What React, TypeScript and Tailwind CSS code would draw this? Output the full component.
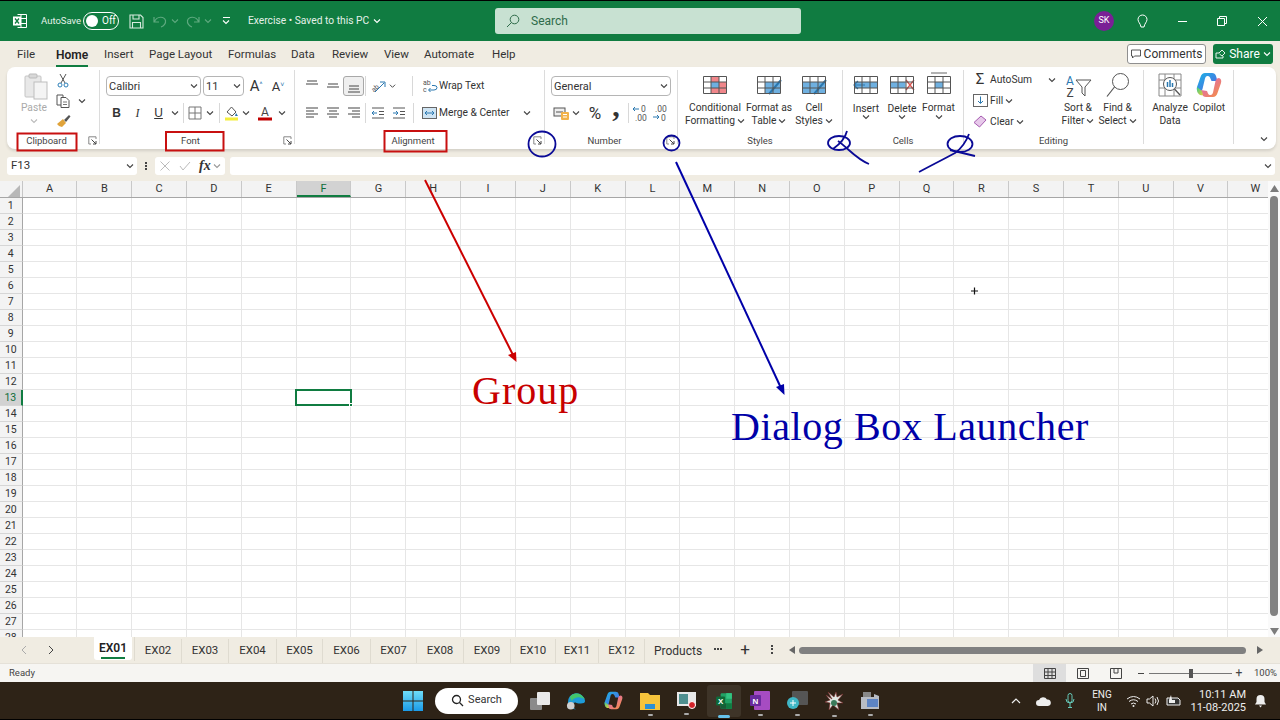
import React from "react";

const cols = "ABCDEFGHIJKLMNOPQRSTUVW".split("");
const rows = Array.from({ length: 28 }, (_, i) => i + 1);
const tabs = [
  ["EX02", "w-[47px]"], ["EX03", "w-[47px]"], ["EX04", "w-[48px]"], ["EX05", "w-[46px]"], ["EX06", "w-[48px]"],
  ["EX07", "w-[46px]"], ["EX08", "w-[47px]"], ["EX09", "w-[47px]"], ["EX10", "w-[45px]"], ["EX11", "w-[43px]"], ["EX12", "w-[46px]"],
];

function Chev({ c = "#444", cls = "" }: { c?: string; cls?: string }) {
  return (
    <svg width="8" height="6" viewBox="0 0 8 6" className={cls}>
      <path d="M1 1.500 L4 4.500 L7 1.500" fill="none" stroke={c} strokeWidth="1.100" />
    </svg>
  );
}

function Lines({ l }: { l: [number, number, number][] }) {
  return (
    <svg width="16" height="16" viewBox="0 0 16 16">
      {l.map(([y, a, b], i) => (
        <path key={i} d={`M${a} ${y}H${b}`} stroke="#555" strokeWidth="1.100" />
      ))}
    </svg>
  );
}

function Launcher() {
  return (
    <svg width="9" height="9" viewBox="0 0 9 9">
      <path d="M8 3V.8H.8V8H3" fill="none" stroke="#888" />
      <path d="M3.500 3.500L8 8M8 5V8H5" fill="none" stroke="#444" />
    </svg>
  );
}

function Group({ w, label, launcher, children }: { w: string; label: string; launcher?: boolean; children: React.ReactNode }) {
  return (
    <div className={`${w} shrink-0 h-full flex flex-col relative`}>
      <div className="h-[65px] shrink-0">{children}</div>
      <div className="flex items-center h-[17px]">
        <div className="flex-1 text-center text-[9.5px] text-[#444] leading-none">{label}</div>
        {launcher && <div className="w-[13px] flex justify-center"><Launcher /></div>}
      </div>
    </div>
  );
}

function Sep() {
  return <div className="w-px h-[74px] my-[3px] bg-[#dcdcdc] shrink-0" />;
}

function RSep() {
  return <div className="w-px h-[20px] bg-[#d8d8d8] shrink-0" />;
}

function Box({ w, children, sel }: { w: string; children?: React.ReactNode; sel?: boolean }) {
  return (
    <div className={`${w} h-[20px] shrink-0 flex items-center justify-center ${sel ? "bg-[#efefef] border border-[#a8a8a8] rounded-[3px]" : ""}`}>{children}</div>
  );
}

function Select({ w, text }: { w: string; text: string }) {
  return (
    <div className={`${w} h-[20px] shrink-0 border border-[#b5b5b5] rounded-[4px] flex items-center justify-between pl-[2px] pr-[2px] bg-white`}>
      <span className="text-[11px] text-[#333] leading-none">{text}</span>
      <Chev />
    </div>
  );
}

function Big({ w, icon, a, b, low }: { w: string; icon: React.ReactNode; a: string; b?: string; low?: boolean }) {
  return (
    <div className={`${w} shrink-0 flex flex-col items-center pt-[5px]`}>
      <div className="h-[26px] flex items-center justify-center">{icon}</div>
      <div className={`text-[10.25px] leading-[13px] text-[#333] text-center whitespace-nowrap ${low ? "mt-[4px]" : "mt-[3px]"}`}>{a}</div>
      <div className={`text-[10.25px] leading-[13px] text-[#333] text-center whitespace-nowrap flex items-center justify-center gap-[2px] ${low ? "mt-[-1px]" : ""}`}>
        {b && <span>{b}</span>}
        {b !== "Data" && <Chev />}
      </div>
    </div>
  );
}

const TableIcon = ({ children }: { children?: React.ReactNode }) => (
  <svg width="26" height="22" viewBox="0 0 26 22" className="overflow-visible">
    {children}
    <path d="M1.500 2.500H24.500V19.500H1.500ZM1.500 8H24.500M1.500 14H24.500M9 2.500V19.500M17 2.500V19.500" fill="none" stroke="#555" strokeWidth="1" />
  </svg>
);

function Excel({ s = 16 }: { s?: number }) {
  return (
    <svg width={s} height={s} viewBox="0 0 16 16">
      <rect x="5" y="1" width="10" height="14" rx="1" fill="#21a366" />
      <rect x="10" y="1" width="5" height="5" fill="#33c481" />
      <rect x="10" y="10" width="5" height="5" fill="#107c41" />
      <rect x="5" y="10" width="5" height="5" fill="#185c37" />
      <rect x="1" y="4" width="8" height="8" rx="1" fill="#0e6b38" />
      <text x="5" y="10.400" fontSize="7" fill="#fff" textAnchor="middle" fontWeight="700" fontFamily="Liberation Sans, sans-serif">X</text>
    </svg>
  );
}

function Copilot({ s = 26, id = "a" }: { s?: number; id?: string }) {
  return (
    <svg width={s} height={s} viewBox="0 0 26 26">
      <defs>
        <linearGradient id={`cp1${id}`} x1="0" y1="0" x2="1" y2="1"><stop offset="0" stopColor="#19b5e5" /><stop offset="1" stopColor="#5a5fe0" /></linearGradient>
        <linearGradient id={`cp2${id}`} x1="0" y1="0" x2="1" y2="1"><stop offset="0" stopColor="#d95fd0" /><stop offset="1" stopColor="#f7933a" /></linearGradient>
        <linearGradient id={`cp3${id}`} x1="0" y1="0" x2="1" y2="1"><stop offset="0" stopColor="#3ccf86" /><stop offset="1" stopColor="#e9c93c" /></linearGradient>
      </defs>
      <path d="M9 1h7c2 0 3.500 1 4 3l1.500 5h-6L14 5.500C13.500 4.500 12.500 4 11.500 4 10 4 9.500 5 9 6.500L6.500 17c-.5 2-2 3-3.500 3C1 19.500.3 17.500 1 15L4.500 5C5.300 2.500 7 1 9 1z" fill={`url(#cp1${id})`} />
      <path d="M17 25h-7c-2 0-3.500-1-4-3l-1-4 6 1 1 2.500c.5 1 1.500 1.500 2.500 1.500 1.500 0 2-1 2.500-2.500L19.500 9c.5-2 2-3 3.500-3 2 .5 2.700 2.500 2 5l-3.500 10c-.8 2.500-2.500 4-4.500 4z" fill={`url(#cp2${id})`} />
      <path d="M1 15l5 4 1 4c-3 1-5-1-6-4z" fill={`url(#cp3${id})`} />
    </svg>
  );
}

export default function App() {
  return (
    <div className="w-[1280px] h-[720px] relative overflow-hidden flex flex-col bg-[#f0ece2] font-['Roboto',sans-serif] text-[#333]">
      {/* Title bar */}
      <div className="h-[41px] shrink-0 bg-[#107c41] border-t border-black flex items-center text-white relative">
        <div className="w-[41px] pl-[12px] flex items-center">
          <svg width="16" height="16" viewBox="0 0 16 16">
            <path d="M5.500 1.500H14.500V14.500H5.500M9 1.500V14.500M5.500 5.500H14.500M5.500 10.500H14.500" fill="none" stroke="#fff" />
            <rect x="1" y="3.500" width="8" height="9" fill="#fff" />
            <path d="M3 5.500L7 10.500M7 5.500L3 10.500" stroke="#107c41" strokeWidth="1.300" />
          </svg>
        </div>
        <span className="text-[9.5px] w-[42px] text-[#e4f1e9]">AutoSave</span>
        <div className="w-[36px] h-[18px] rounded-full border border-white flex items-center pl-[2px] gap-[4px]">
          <div className="w-[12px] h-[12px] rounded-full bg-white" />
          <span className="text-[10px] leading-none">Off</span>
        </div>
        <div className="ml-[10px] w-[16px]">
          <svg width="15" height="15" viewBox="0 0 15 15">
            <path d="M1 1H11.500L14 3.500V14H1ZM4 1V5H10V1M3.500 14V8.500H11.500V14" fill="none" stroke="#d7ebdf" strokeWidth="1.100" />
          </svg>
        </div>
        <div className="ml-[8px] flex items-center gap-[4px] w-[30px]">
          <svg width="14" height="14" viewBox="0 0 14 14"><path d="M1 3V8H6M1.500 7.500C4 2 11 2 12.500 6.500 13 9 11 12 8 13" fill="none" stroke="#5ea97f" strokeWidth="1.200" /></svg>
          <Chev c="#5ea97f" />
        </div>
        <div className="ml-[3px] flex items-center gap-[4px] w-[30px]">
          <svg width="14" height="14" viewBox="0 0 14 14"><path d="M13 3V8H8M12.500 7.500C10 2 3 2 1.500 6.500 1 9 3 12 6 13" fill="none" stroke="#5ea97f" strokeWidth="1.200" /></svg>
          <Chev c="#5ea97f" />
        </div>
        <div className="ml-[5px] w-[10px] flex flex-col items-center gap-[1px]">
          <div className="w-[7px] h-px bg-white" />
          <Chev c="#fff" />
        </div>
        <div className="ml-[17px] text-[10.25px] flex items-center gap-[4px] w-[247px] text-[#e4f1e9]">
          <span>Exercise&nbsp;•&nbsp;Saved to this PC</span>
          <Chev c="#fff" />
        </div>
        <div className="w-[306px] h-[26px] bg-[#c8e1d2] rounded-[3px] flex items-center pl-[11px] gap-[11px] text-[#2f6b4a] mt-[-1px]">
          <svg width="14" height="14" viewBox="0 0 14 14"><circle cx="8.500" cy="5.500" r="4.300" fill="none" stroke="#2f6b4a" /><path d="M5.500 8.500L1 13" stroke="#2f6b4a" /></svg>
          <span className="text-[12px]">Search</span>
        </div>
        <div className="flex-1" />
        <div className="w-[20px] h-[20px] rounded-full bg-[#7a1f96] flex items-center justify-center text-[9px]">SK</div>
        <div className="w-[20px] ml-[18px] flex justify-center">
          <svg width="11" height="14" viewBox="0 0 11 14"><path d="M5.500 1A4.500 4.500 0 0 0 1 5.500C1 8 3.500 9.500 4 13H7C7.500 9.500 10 8 10 5.500A4.500 4.500 0 0 0 5.500 1Z" fill="none" stroke="#fff" /></svg>
        </div>
        <div className="w-[40px] ml-[10px] flex justify-center"><div className="w-[9px] h-px bg-white" /></div>
        <div className="w-[40px] flex justify-center">
          <svg width="10" height="10" viewBox="0 0 10 10"><path d="M.5 2.500H7.500V9.500H.5ZM2.500 2.500V.5H9.500V7.500H7.500" fill="none" stroke="#fff" /></svg>
        </div>
        <div className="w-[40px] mr-[-2px] flex justify-center">
          <svg width="11" height="11" viewBox="0 0 11 11"><path d="M1 1L10 10M10 1L1 10" stroke="#fff" /></svg>
        </div>
      </div>

      {/* Ribbon tabs */}
      <div className="h-[26px] shrink-0 flex items-center pl-[17px] pr-[7px] text-[11.5px] text-[#333] relative">
        <span className="w-[39px] pt-px">File</span>
        <span className="w-[48px] pt-px font-semibold text-[#222] relative text-[12px]">
          Home
          <div className="absolute left-0 bottom-[-3px] w-[32px] h-[2px] bg-[#107c41]" />
        </span>
        <span className="w-[45px] pt-px">Insert</span>
        <span className="w-[79px] pt-px">Page Layout</span>
        <span className="w-[63px] pt-px">Formulas</span>
        <span className="w-[41px] pt-px">Data</span>
        <span className="w-[52px] pt-px">Review</span>
        <span className="w-[40px] pt-px">View</span>
        <span className="w-[68px] pt-px">Automate</span>
        <span className="pt-px">Help</span>
        <div className="flex-1" />
        <div className="w-[79px] h-[20px] border border-[#8f8f8f] bg-white rounded-[3px] flex items-center justify-center gap-[3px] text-[12px] mt-[-1px]">
          <svg width="10" height="10" viewBox="0 0 10 10"><path d="M.5 1H9.500V7H3.500L1.500 9V7H.5Z" fill="none" stroke="#444" strokeWidth=".9" /></svg>
          Comments
        </div>
        <div className="ml-[7px] w-[60px] h-[20px] bg-[#107c41] rounded-[3px] flex items-center justify-center gap-[3px] text-[12px] text-white mt-[-1px]">
          <svg width="11" height="10" viewBox="0 0 11 10"><path d="M1 4H4L7 1 10 4 7 7 4.500 5M1 4V9H8V7" fill="none" stroke="#fff" strokeWidth=".9" /></svg>
          Share
          <Chev c="#fff" />
        </div>
      </div>

      {/* Ribbon */}
      <div className="h-[82px] mx-[7px] w-[1269px] shrink-0 bg-white rounded-[8px] flex shadow-[0_2px_3px_rgba(0,0,0,0.12)]">
        <Group w="w-[92px]" label="Clipboard" launcher>
          <div className="flex pl-[12px] pt-[6px]">
            <div className="w-[30px] flex flex-col items-center">
              <svg width="24" height="27" viewBox="0 0 24 27" className="ml-[4px]">
                <rect x="1" y="3" width="16" height="21" rx="1" fill="#e8e8e8" stroke="#c4c4c4" />
                <rect x="5" y="1" width="8" height="4" rx="1" fill="#d8d8d8" stroke="#bbb" />
                <rect x="10" y="9" width="13" height="17" fill="#f4f4f4" stroke="#bdbdbd" />
              </svg>
              <span className="text-[10.25px] text-[#aaa] leading-none mt-[3px]">Paste</span>
              <Chev c="#bbb" cls="mt-[5px]" />
            </div>
            <div className="ml-[5px] w-[18px] flex flex-col items-center gap-[6px]">
              <svg width="12" height="15" viewBox="0 0 12 15"><path d="M3 1L8 10M9 1L4 10" stroke="#555" /><circle cx="3" cy="12" r="2" fill="none" stroke="#2c7fb8" /><circle cx="9" cy="12" r="2" fill="none" stroke="#2c7fb8" /></svg>
              <svg width="14" height="14" viewBox="0 0 14 14"><path d="M1 1H7V11H1Z" fill="none" stroke="#555" /><path d="M5 3.500H10L13 6.500V13.500H5Z" fill="#fff" stroke="#555" /><path d="M7 8H11M7 10.500H11" stroke="#777" /></svg>
              <svg width="15" height="14" viewBox="0 0 15 14"><path d="M8 6L13 1 14.500 2.500 10 8Z" fill="#555" /><path d="M1 10L7 5 10 9 6 13Q3 13 1 10Z" fill="#e0a33a" /></svg>
            </div>
            <Chev cls="ml-[6px] mt-[25px]" />
          </div>
        </Group>
        <Sep />
        <Group w="w-[194px]" label="Font" launcher>
          <div className="pl-[6px] pt-[9px]">
            <div className="flex items-center">
              <Select w="w-[95px]" text="Calibri" />
              <div className="w-[2px]" />
              <Select w="w-[41px]" text="11" />
              <Box w="w-[24px]"><span className="text-[15px] leading-none">A<sup className="text-[7px] text-[#2a78b0]">^</sup></span></Box>
              <Box w="w-[20px]"><span className="text-[13px] leading-none">A<sup className="text-[7px] text-[#2a78b0]">˅</sup></span></Box>
            </div>
            <div className="flex items-center mt-[7px]">
              <Box w="w-[21px]"><span className="text-[12px] font-bold font-['Liberation_Sans']">B</span></Box>
              <Box w="w-[21px]"><span className="text-[12px] italic font-['Liberation_Serif']">I</span></Box>
              <Box w="w-[21px]"><span className="text-[12px] underline font-['Liberation_Sans']">U</span></Box>
              <Box w="w-[11px]"><Chev /></Box>
              <Box w="w-[6px]"><RSep /></Box>
              <Box w="w-[18px]">
                <svg width="14" height="14" viewBox="0 0 14 14"><path d="M1 1H13V13H1ZM7 1V13M1 7H13" fill="none" stroke="#777" /></svg>
              </Box>
              <Box w="w-[12px]"><Chev /></Box>
              <Box w="w-[6px]"><RSep /></Box>
              <Box w="w-[18px]">
                <svg width="15" height="16" viewBox="0 0 15 16"><path d="M3 7L7.500 2 12 7 8 11Z" fill="#fff" stroke="#555" /><path d="M12 8L14 11H11Z" fill="#2a78b0" /><rect x="1" y="12.500" width="13" height="3" fill="#f4ee3b" /></svg>
              </Box>
              <Box w="w-[12px]"><Chev /></Box>
              <Box w="w-[26px]">
                <svg width="14" height="17" viewBox="0 0 14 17" className="overflow-visible"><text x="7" y="11" fontSize="12" textAnchor="middle" fill="#444" fontFamily="Roboto, sans-serif">A</text><rect x="0" y="12.500" width="14" height="3" fill="#c00000" /></svg>
              </Box>
              <Box w="w-[8px]"><Chev /></Box>
            </div>
          </div>
        </Group>
        <Sep />
        <Group w="w-[249px]" label="Alignment" launcher>
          <div className="pl-[6px] pt-[9px]">
            <div className="flex items-center">
              <Box w="w-[21px]"><Lines l={[[3, 3, 13], [6, 2, 14]]} /></Box>
              <Box w="w-[21px]"><Lines l={[[6, 3, 13], [9, 2, 14]]} /></Box>
              <Box w="w-[21px]" sel><Lines l={[[8, 3, 13], [11, 3, 13], [14, 2, 14]]} /></Box>
              <Box w="w-[3px]"><RSep /></Box>
              <Box w="w-[22px]">
                <svg width="15" height="15" viewBox="0 0 15 15" className="overflow-visible"><text x="0" y="10" fontSize="7" transform="rotate(-40 6 8)" fill="#555" fontFamily="Roboto, sans-serif">ab</text><path d="M4 13L13 4M9 3H14V8" fill="none" stroke="#2a78b0" /></svg>
              </Box>
              <Box w="w-[7px]"><Chev /></Box>
              <div className="w-[16px]" />
              <Box w="w-[1px]"><RSep /></Box>
              <div className="w-[9px]" />
              <Box w="w-[16px]">
                <svg width="15" height="14" viewBox="0 0 15 14" className="overflow-visible"><text x="0" y="6" fontSize="7" fill="#555" fontFamily="Roboto, sans-serif">ab</text><text x="0" y="13" fontSize="7" fill="#555" fontFamily="Roboto, sans-serif">c</text><path d="M6 11H11Q14 11 14 8.500 14 6.500 11 6.500H9M7.500 9L5.500 11 7.500 13" fill="none" stroke="#2a78b0" /></svg>
              </Box>
              <span className="text-[10.25px] ml-[1px] whitespace-nowrap">Wrap Text</span>
            </div>
            <div className="flex items-center mt-[7px]">
              <Box w="w-[21px]"><Lines l={[[3, 2, 14], [6, 2, 10], [9, 2, 14], [12, 2, 10]]} /></Box>
              <Box w="w-[21px]"><Lines l={[[3, 2, 14], [6, 4, 12], [9, 2, 14], [12, 4, 12]]} /></Box>
              <Box w="w-[21px]"><Lines l={[[3, 2, 14], [6, 6, 14], [9, 2, 14], [12, 6, 14]]} /></Box>
              <Box w="w-[3px]"><RSep /></Box>
              <Box w="w-[21px]">
                <svg width="16" height="16" viewBox="0 0 16 16"><path d="M2 3H14M9 6.500H14M9 9.500H14M2 13H14" stroke="#555" /><path d="M2 8H7M4 6L2 8 4 10" fill="none" stroke="#2a78b0" /></svg>
              </Box>
              <Box w="w-[21px]">
                <svg width="16" height="16" viewBox="0 0 16 16"><path d="M2 3H14M9 6.500H14M9 9.500H14M2 13H14" stroke="#555" /><path d="M2 8H7M5 6L7 8 5 10" fill="none" stroke="#2a78b0" /></svg>
              </Box>
              <div className="w-[4px]" />
              <Box w="w-[1px]"><RSep /></Box>
              <div className="w-[7px]" />
              <Box w="w-[16px]">
                <svg width="15" height="14" viewBox="0 0 15 14"><rect x=".5" y="1.500" width="14" height="11" fill="#cfe4f3" stroke="#666" /><path d="M3 7H12M3 7L5 5M3 7L5 9M12 7L10 5M12 7L10 9" fill="none" stroke="#2a78b0" /></svg>
              </Box>
              <span className="text-[10.25px] ml-[2px] w-[84px] whitespace-nowrap">Merge &amp; Center</span>
              <Chev />
            </div>
          </div>
        </Group>
        <Sep />
        <Group w="w-[132px]" label="Number" launcher>
          <div className="pl-[6px] pt-[9px]">
            <Select w="w-[120px]" text="General" />
            <div className="flex items-center mt-[7px]">
              <Box w="w-[20px]">
                <svg width="17" height="15" viewBox="0 0 17 15"><rect x="1" y="2" width="11" height="8" fill="#eee" stroke="#555" /><path d="M3 6H10" stroke="#555" /><rect x="8" y="6" width="8" height="8" rx="1" fill="#f2b24a" /><path d="M10 8.500H14M10 11H14" stroke="#fff" /></svg>
              </Box>
              <Box w="w-[10px]"><Chev /></Box>
              <div className="w-[4px]" />
              <Box w="w-[20px]"><span className="text-[17px] leading-none">%</span></Box>
              <div className="w-[1px]" />
              <Box w="w-[20px]"><span className="text-[30px] font-bold font-['Liberation_Serif'] leading-[20px] mt-[-14px]">,</span></Box>
              <div className="w-[2px]" />
              <Box w="w-[1px]"><RSep /></Box>
              <div className="w-[1px]" />
              <Box w="w-[20px]">
                <svg width="16" height="17" viewBox="0 0 16 17" className="overflow-visible"><text x="9" y="7" fontSize="8.500" fill="#555" fontFamily="Roboto, sans-serif">0</text><text x="3" y="15.500" fontSize="8.500" fill="#555" fontFamily="Roboto, sans-serif">.00</text><path d="M1 4H7M3 2L1 4 3 6" fill="none" stroke="#2a78b0" /></svg>
              </Box>
              <Box w="w-[20px]">
                <svg width="16" height="17" viewBox="0 0 16 17" className="overflow-visible"><text x="3" y="7" fontSize="8.500" fill="#555" fontFamily="Roboto, sans-serif">.00</text><text x="9" y="15.500" fontSize="8.500" fill="#555" fontFamily="Roboto, sans-serif">0</text><path d="M1 12H7M5 10L7 12 5 14" fill="none" stroke="#2a78b0" /></svg>
              </Box>
            </div>
          </div>
        </Group>
        <Sep />
        <Group w="w-[164px]" label="Styles">
          <div className="flex pl-[4px]">
            <Big w="w-[66px]" a="Conditional" b="Formatting" icon={
              <TableIcon>
                <rect x="9" y="2.500" width="8" height="5.500" fill="#f0868a" />
                <rect x="9" y="8" width="8" height="6" fill="#6fb0e0" />
                <rect x="9" y="14" width="15" height="5.500" fill="#f0868a" />
                <rect x="17" y="8" width="7.500" height="6" fill="#f0868a" />
              </TableIcon>} />
            <Big w="w-[42px]" a="Format as" b="Table" icon={
              <TableIcon>
                <rect x="9" y="8" width="15" height="11.500" fill="#6fb0e0" />
                <path d="M25 6L13 20" stroke="#2a78b0" strokeWidth="2" />
              </TableIcon>} />
            <Big w="w-[48px]" a="Cell" b="Styles" icon={
              <TableIcon>
                <rect x="1.500" y="8" width="23" height="11.500" fill="#6fb0e0" />
                <path d="M25 6L13 20" stroke="#2a78b0" strokeWidth="2" />
              </TableIcon>} />
          </div>
        </Group>
        <Sep />
        <Group w="w-[120px]" label="Cells">
          <div className="flex pl-[5px]">
            <Big w="w-[36px]" low a="Insert" icon={
              <TableIcon>
                <rect x="1.500" y="8" width="23" height="6" fill="#6fb0e0" />
                <path d="M12 11H1M5 7L1 11 5 15" fill="none" stroke="#2a78b0" strokeWidth="1.200" />
              </TableIcon>} />
            <Big w="w-[36px]" low a="Delete" icon={
              <TableIcon>
                <rect x="1.500" y="8" width="15" height="6" fill="#6fb0e0" />
                <path d="M17 6L25 16M25 6L17 16" stroke="#d9534f" strokeWidth="1.300" />
              </TableIcon>} />
            <Big w="w-[37px]" a="Format" icon={
              <TableIcon>
                <rect x="9" y="8" width="8" height="6" fill="#6fb0e0" />
                <path d="M5 -1H21" stroke="#666" strokeWidth="1" />
              </TableIcon>} />
          </div>
        </Group>
        <Sep />
        <Group w="w-[179px]" label="Editing">
          <div className="flex pl-[7px]">
            <div className="w-[87px] shrink-0 flex flex-col pt-[2px] text-[10.25px]">
              <div className="h-[21px] flex items-center">
                <div className="w-[18px] text-center text-[15px] leading-none">Σ</div>
                <span className="ml-[1px] w-[58px]">AutoSum</span>
                <Chev />
              </div>
              <div className="h-[21px] flex items-center">
                <div className="w-[18px] flex justify-center">
                  <svg width="15" height="13" viewBox="0 0 15 13"><rect x=".5" y=".5" width="14" height="12" fill="#fff" stroke="#666" /><path d="M7.500 2.500V9M5 7L7.500 9.500 10 7" fill="none" stroke="#2a78b0" /></svg>
                </div>
                <span className="ml-[1px]">Fill</span>
                <Chev cls="ml-[2px]" />
              </div>
              <div className="h-[21px] flex items-center">
                <div className="w-[18px] flex justify-center">
                  <svg width="14" height="13" viewBox="0 0 14 13"><path d="M1 7.500L8 1 13 5 6.500 12Z" fill="#e7c9ea" stroke="#a55bb0" /></svg>
                </div>
                <span className="ml-[1px]">Clear</span>
                <Chev cls="ml-[2px]" />
              </div>
            </div>
            <Big w="w-[40px]" a="Sort &" b="Filter" icon={
              <svg width="28" height="26" viewBox="0 0 28 26" className="overflow-visible">
                <text x="6" y="13" fontSize="12" textAnchor="middle" fill="#2a78b0" fontFamily="Roboto, sans-serif">A</text>
                <text x="6" y="25" fontSize="12" textAnchor="middle" fill="#444" fontFamily="Roboto, sans-serif">Z</text>
                <path d="M12 8H27L21 15V24L18 21V15Z" fill="none" stroke="#555" />
              </svg>} />
            <Big w="w-[39px]" a="Find &" b="Select" icon={
              <svg width="26" height="26" viewBox="0 0 26 26">
                <circle cx="15.500" cy="9.500" r="8" fill="none" stroke="#555" />
                <path d="M9.500 15L2 24.500" stroke="#555" strokeWidth="1.200" />
              </svg>} />
          </div>
        </Group>
        <Sep />
        <Group w="w-[89px]" label="">
          <div className="flex pl-[6px]">
            <Big w="w-[40px]" a="Analyze" b="Data" icon={
              <svg width="24" height="24" viewBox="0 0 24 24">
                <path d="M1 1H23V23H1ZM1 7H23M1 15H23M7 1V23M16 1V23" fill="none" stroke="#888" />
                <circle cx="12" cy="11" r="6.500" fill="#fff" stroke="#555" />
                <path d="M9.500 9V14M12 7V14M14.500 10V14" stroke="#2a78b0" strokeWidth="1.500" />
                <path d="M16.500 16L22 22" stroke="#555" strokeWidth="1.300" />
              </svg>} />
            <div className="w-[38px] shrink-0 flex flex-col items-center pt-[5px]">
              <Copilot id="r" />
              <span className="text-[10.25px] leading-[13px] mt-[3px]">Copilot</span>
            </div>
          </div>
        </Group>
        <Sep />
        <div className="flex-1 flex items-end justify-end pr-[8px] pb-[7px]"><Chev /></div>
      </div>

      {/* Formula bar */}
      <div className="h-[18px] mt-[8px] shrink-0 flex items-center pl-[7px] pr-[5px]">
        <div className="w-[130px] h-full bg-white rounded-[3px] flex items-center justify-between pl-[4px] pr-[3px] text-[11.5px]">
          <span>F13</span>
          <Chev />
        </div>
        <div className="w-[18px] flex flex-col items-center gap-[1px]">
          <div className="w-[2px] h-[2px] bg-[#444]" /><div className="w-[2px] h-[2px] bg-[#444]" /><div className="w-[2px] h-[2px] bg-[#444]" />
        </div>
        <div className="w-[70px] h-full bg-white rounded-[3px] flex items-center pl-[5px]">
          <svg width="10" height="10" viewBox="0 0 10 10"><path d="M.5.5L9.500 9.500M9.500.5L.5 9.500" stroke="#bbb" /></svg>
          <svg width="12" height="10" viewBox="0 0 12 10" className="ml-[9px]"><path d="M1 5L4 9 11 1" fill="none" stroke="#bbb" /></svg>
          <span className="ml-[8px] text-[14px] italic font-bold font-['Liberation_Serif'] leading-none">fx</span>
          <Chev c="#999" cls="ml-[2px]" />
        </div>
        <div className="w-[5px]" />
        <div className="flex-1 h-full bg-white rounded-[3px] flex items-center justify-end pr-[3px]"><Chev /></div>
      </div>

      {/* Grid */}
      <div className="h-[456px] mt-[6px] shrink-0 flex bg-white overflow-hidden">
        <div className="w-[1268px] overflow-hidden shrink-0">
          <div className="flex h-[17px] bg-[#f3f3f3] border-b border-[#a6a6a6] w-[1300px]">
            <div className="w-[22.6px] shrink-0 flex items-end justify-end pr-[2px] border-r border-[#c6c6c6]">
              <svg width="12" height="12" viewBox="0 0 12 12"><path d="M12 0V12H0Z" fill="#b8b8b8" /></svg>
            </div>
            {cols.map((c) => (
              <div key={c} className={`w-[54.82px] shrink-0 text-center text-[11px] leading-[16px] border-r border-[#c9c9c9] ${c === "F" ? "bg-[#d2d2d2] text-[#0f6d3a] border-b-2 border-b-[#107c41]" : "text-[#333]"}`}>{c}</div>
            ))}
          </div>
          {rows.map((r) => (
            <div key={r} className="flex h-[16px] w-[1300px]">
              <div className={`w-[22.6px] shrink-0 text-center text-[10.5px] leading-[15px] border-b border-[#d6d6d6] border-r ${r === 13 ? "bg-[#d2d2d2] text-[#0f6d3a] border-r-2 border-r-[#107c41]" : "bg-[#f3f3f3] border-r-[#a6a6a6] text-[#333]"}`}>{r}</div>
              {cols.map((c) => (
                <div key={c} className="w-[54.82px] shrink-0 border-r border-b border-[#e6e6e6] relative">
                  {r === 13 && c === "F" && (
                    <div className="absolute left-[-2px] top-[-1px] w-[57px] h-[17px] border-2 border-[#107c41] z-10">
                      <div className="absolute right-[-3px] bottom-[-3px] w-[4px] h-[4px] bg-[#107c41] border border-white" />
                    </div>
                  )}
                </div>
              ))}
            </div>
          ))}
        </div>
        <div className="w-[12px] shrink-0 bg-[#fafafa] flex flex-col items-center">
          <svg width="9" height="7" viewBox="0 0 9 7" className="mt-[4px]"><path d="M4.500 0L9 7H0Z" fill="#7c7c7c" /></svg>
          <div className="w-[8px] h-[420px] rounded-full bg-[#828282] mt-[4px]" />
          <div className="flex-1" />
          <svg width="9" height="7" viewBox="0 0 9 7" className="mb-[2px]"><path d="M4.500 7L9 0H0Z" fill="#7c7c7c" /></svg>
        </div>
      </div>

      {/* Sheet tabs */}
      <div className="h-[27px] shrink-0 flex items-start bg-[#f0ece2] text-[11.5px] relative border-b border-[#e5e1d8]">
        <div className="w-[94px] h-[26px] flex items-center pl-[21px] gap-[21px]">
          <svg width="6" height="10" viewBox="0 0 6 10"><path d="M5 1L1 5 5 9" fill="none" stroke="#aaa" /></svg>
          <svg width="6" height="10" viewBox="0 0 6 10"><path d="M1 1L5 5 1 9" fill="none" stroke="#444" /></svg>
        </div>
        <div className="w-[38px] h-[23px] bg-white rounded-b-[3px] flex flex-col items-center font-semibold text-[12px] text-[#222] pt-[3px] leading-[16px]">
          EX01
          <div className="w-[24px] h-[1.500px] bg-[#107c41] mt-[1px]" />
        </div>
        <div className="w-[3px] h-[24px] border-r border-[#dfdbd0]" />
        {tabs.map(([t, w]) => (
          <div key={t} className={`${w} h-[24px] mt-[2px] flex items-center justify-center border-r border-[#dfdbd0]`}>{t}</div>
        ))}
        <div className="w-[66px] h-[26px] mt-px flex items-center justify-center text-[12px]">Products</div>
        <div className="w-[14px] h-[24px] flex items-center justify-center gap-[1px]">
          <i className="w-[2px] h-[2px] bg-[#444]" /><i className="w-[2px] h-[2px] bg-[#444]" /><i className="w-[2px] h-[2px] bg-[#444]" />
        </div>
        <div className="w-[40px] h-[24px] flex items-center justify-center text-[17px] leading-none">+</div>
        <div className="w-[14px] h-[24px] flex flex-col items-center justify-center gap-[1.500px]">
          <i className="w-[2px] h-[2px] bg-[#444]" /><i className="w-[2px] h-[2px] bg-[#444]" /><i className="w-[2px] h-[2px] bg-[#444]" />
        </div>
        <div className="ml-[10px] h-[26px] flex items-center">
          <svg width="6" height="8" viewBox="0 0 6 8"><path d="M6 0V8L0 4Z" fill="#666" /></svg>
          <div className="ml-[4px] w-[447px] h-[7px] rounded-full bg-[#808080]" />
          <svg width="6" height="8" viewBox="0 0 6 8" className="ml-[11px]"><path d="M0 0V8L6 4Z" fill="#666" /></svg>
        </div>
      </div>

      {/* Status bar */}
      <div className="h-[18px] shrink-0 bg-[#f6f5f2] flex items-center pl-[9px] text-[9.5px] text-[#444]">
        <span className="w-[1024px]">Ready</span>
        <div className="w-[33px] h-full bg-[#dedede] flex items-center justify-center">
          <svg width="12" height="11" viewBox="0 0 12 11"><path d="M.5.5H11.500V10.500H.5ZM.5 4H11.500M.5 7.500H11.500M4 .5V10.500M8 .5V10.500" fill="none" stroke="#444" /></svg>
        </div>
        <div className="w-[33px] flex justify-center">
          <svg width="12" height="11" viewBox="0 0 12 11"><path d="M.5.5H11.500V10.500H.5ZM3.500 2.500H8.500V8.500H3.500Z" fill="none" stroke="#444" /></svg>
        </div>
        <div className="w-[33px] flex justify-center">
          <svg width="12" height="11" viewBox="0 0 12 11"><path d="M.5.5H11.500V10.500H.5ZM4 .5V5H8V.5" fill="none" stroke="#444" /></svg>
        </div>
        <div className="ml-[6px] w-[6px] h-px bg-[#444]" />
        <div className="ml-[5px] w-[83px] h-px bg-[#777] relative flex justify-center items-center">
          <div className="w-[4px] h-[9px] bg-[#555] absolute" />
        </div>
        <div className="ml-[1px] text-[12px] leading-none w-[12px] text-center">+</div>
        <span className="ml-[9px]">100%</span>
      </div>

      {/* Taskbar */}
      <div className="flex-1 bg-[#2e2317] flex items-center relative border-b border-black">
        <div className="w-[403px]" />
        <svg width="20" height="20" viewBox="0 0 20 20">
          <defs><linearGradient id="w" x1="0" y1="0" x2="0" y2="1"><stop offset="0" stopColor="#6fdcf7" /><stop offset="1" stopColor="#1a9be8" /></linearGradient></defs>
          <path d="M0 0H9.500V9.500H0ZM10.500 0H20V9.500H10.500ZM0 10.500H9.500V20H0ZM10.500 10.500H20V20H10.500Z" fill="url(#w)" />
        </svg>
        <div className="ml-[12px] w-[83px] h-[26px] rounded-full bg-white flex items-center justify-center gap-[4px] text-[11px] text-[#333]">
          <svg width="13" height="13" viewBox="0 0 13 13"><circle cx="5.500" cy="5.500" r="4" fill="none" stroke="#222" strokeWidth="1.300" /><path d="M8.500 8.500L12 12" stroke="#222" strokeWidth="1.300" /></svg>
          Search
        </div>
        <div className="ml-[12px] w-[20px] flex justify-center">
          <svg width="20" height="18" viewBox="0 0 20 18"><rect x="0" y="6" width="12" height="12" rx="1" fill="#8a8a8a" /><rect x="7" y="0" width="13" height="13" rx="1" fill="#e9e9e9" /></svg>
        </div>
        <div className="ml-[16px] w-[20px] flex justify-center">
          <svg width="21" height="21" viewBox="0 0 21 21"><path d="M2 13A9 9 0 0 1 20 11C20 14 15 14 11 13 9 12 7 13 7 15 7 18 10 20 11 20A9 9 0 0 1 2 13Z" fill="#1e9bd8" /><path d="M4 7C7 2 16 1 20 10 17 6 9 6 6 11Z" fill="#43c76a" /><circle cx="5" cy="16" r="4" fill="#cfcfcf" /></svg>
        </div>
        <div className="ml-[17px] w-[20px] flex justify-center"><Copilot s={19} id="t" /></div>
        <div className="ml-[17px] w-[20px] flex flex-col items-center relative">
          <svg width="20" height="18" viewBox="0 0 20 18"><path d="M0 1H8L10 3H20V18H0Z" fill="#f5c33b" /><rect x="5" y="12" width="10" height="5" fill="#2b8fd4" /></svg>
          <div className="absolute bottom-[-6px] w-[5px] h-[2px] rounded-full bg-[#aaa]" />
        </div>
        <div className="ml-[16px] w-[20px] flex flex-col items-center relative">
          <svg width="19" height="17" viewBox="0 0 19 17"><rect x="0" y="0" width="19" height="14" fill="#e8e8e8" /><rect x="2" y="2" width="9" height="10" fill="#4f8f8f" /><circle cx="15" cy="13" r="3.500" fill="#d3232a" stroke="#fff" /></svg>
          <div className="absolute bottom-[-6px] w-[5px] h-[2px] rounded-full bg-[#aaa]" />
        </div>
        <div className="ml-[11px] w-[34px] h-[32px] bg-[#3e3428] rounded-[3px] flex flex-col items-center justify-center relative">
          <Excel s={18} />
          <div className="absolute bottom-[-1px] w-[12px] h-[2.500px] rounded-full bg-[#66c3ec]" />
        </div>
        <div className="ml-[9px] w-[20px] flex flex-col items-center relative">
          <svg width="20" height="19" viewBox="0 0 20 19"><rect x="4" y="0" width="16" height="19" rx="1" fill="#a64cc2" /><rect x="0" y="4" width="11" height="11" rx="1" fill="#6a2a9e" /><text x="5.500" y="12.500" fontSize="8" fontWeight="700" fill="#fff" textAnchor="middle" fontFamily="Liberation Sans, sans-serif">N</text></svg>
          <div className="absolute bottom-[-6px] w-[5px] h-[2px] rounded-full bg-[#aaa]" />
        </div>
        <div className="ml-[17px] w-[20px] flex flex-col items-center relative">
          <svg width="21" height="19" viewBox="0 0 21 19"><rect x="5" y="0" width="16" height="14" rx="1" fill="#555" /><circle cx="6" cy="12" r="6" fill="#3fb6c6" /><path d="M3 12H9M6 9V15" stroke="#fff" /></svg>
          <div className="absolute bottom-[-6px] w-[5px] h-[2px] rounded-full bg-[#aaa]" />
        </div>
        <div className="ml-[17px] w-[20px] flex flex-col items-center relative">
          <svg width="20" height="20" viewBox="0 0 20 20"><path d="M2 4L8 8 4 1 10 6 12 1 13 6 19 3 14 9 19 12 13 12 15 19 9 14 5 19 6 12 1 11 6 9Z" fill="#dfe7e3" stroke="#7a2a2a" strokeWidth=".6" /><circle cx="10" cy="12" r="3" fill="#3a7a5a" /></svg>
          <div className="absolute bottom-[-6px] w-[5px] h-[2px] rounded-full bg-[#aaa]" />
        </div>
        <div className="ml-[16px] w-[20px] flex flex-col items-center relative">
          <svg width="20" height="19" viewBox="0 0 20 19"><path d="M1 6H14V3L19 5V18H1Z" fill="#b8bcc4" /><rect x="7" y="8" width="11" height="8" fill="#5d84c4" /><rect x="3" y="1" width="8" height="5" fill="#888" /></svg>
          <div className="absolute bottom-[-6px] w-[5px] h-[2px] rounded-full bg-[#aaa]" />
        </div>
        <div className="flex-1" />
        <div className="w-[16px] flex justify-center">
          <svg width="10" height="6" viewBox="0 0 10 6"><path d="M1 5L5 1 9 5" fill="none" stroke="#eee" strokeWidth="1.200" /></svg>
        </div>
        <div className="ml-[11px] w-[16px] flex justify-center">
          <svg width="15" height="10" viewBox="0 0 15 10"><path d="M3 10A3 3 0 0 1 3 4 4.500 4.500 0 0 1 11 3.500 3 3 0 0 1 12 10Z" fill="#eee" /></svg>
        </div>
        <div className="ml-[11px] w-[16px] flex justify-center">
          <svg width="10" height="15" viewBox="0 0 10 15"><rect x="3" y="0.500" width="4" height="9" rx="2" fill="none" stroke="#66c9b8" /><path d="M1 6A4 4 0 0 0 9 6M5 10V14.500M3 14.500H7" fill="none" stroke="#66c9b8" /></svg>
        </div>
        <div className="ml-[8px] w-[32px] text-center text-[10px] leading-[13px] text-[#eee]">ENG<br />IN</div>
        <div className="ml-[7px] w-[16px] flex justify-center">
          <svg width="15" height="12" viewBox="0 0 15 12"><path d="M1 4Q7.500-1 14 4M3 6.500Q7.500 3 12 6.500M5 9Q7.500 7 10 9" fill="none" stroke="#eee" /><circle cx="7.500" cy="11" r="1" fill="#eee" /></svg>
        </div>
        <div className="ml-[4px] w-[16px] flex justify-center">
          <svg width="15" height="12" viewBox="0 0 15 12"><path d="M1 4H3.500L7 1V11L3.500 8H1Z" fill="none" stroke="#eee" /><path d="M9 3.500Q11 6 9 8.500M11 2Q14 6 11 10" fill="none" stroke="#eee" /></svg>
        </div>
        <div className="ml-[4px] w-[16px] flex justify-center">
          <svg width="15" height="11" viewBox="0 0 15 11"><path d="M1 3H12L14 5V10H1Z" fill="#333" stroke="#eee" /><path d="M3 5L5 0 6 5H9V8H3Z" fill="#eee" /></svg>
        </div>
        <div className="ml-[7px] w-[58px] text-right text-[11px] leading-[13px] text-[#eee] whitespace-nowrap">10:11 AM<br />11-08-2025</div>
        <div className="ml-[6px] w-[16px] mr-[12px] flex justify-center">
          <svg width="13" height="14" viewBox="0 0 13 14"><path d="M6.500 1A4 4 0 0 0 2.500 5V8L1 10.500H12L10.500 8V5A4 4 0 0 0 6.500 1ZM5 11.500H8L6.500 13.500Z" fill="#eee" /></svg>
        </div>
      </div>

      {/* Hand-drawn annotations on top of the window */}
      <svg width="1280" height="720" viewBox="0 0 1280 720" className="absolute left-0 top-0 pointer-events-none">
        <path d="M17.500 133.500H76.500V150.500H17.500ZM166 132H223.500V150.500H166ZM384.500 131H446.500V151.500H384.500Z" fill="none" stroke="#c81010" strokeWidth="2" />
        <path d="M425 180L514 357" stroke="#cc0000" strokeWidth="2" fill="none" />
        <path d="M516.500 362L508 355 516 352Z" fill="#cc0000" />
        <path d="M676 162L781 388" stroke="#0000a8" strokeWidth="2" fill="none" />
        <path d="M784.500 395L776 387 784 384Z" fill="#0000a8" />
        <g fill="none" stroke="#0a0a96" strokeWidth="1.800">
          <ellipse cx="542" cy="144" rx="13.500" ry="12.500" />
          <ellipse cx="671.500" cy="143" rx="8" ry="7.500" />
          <ellipse cx="839" cy="143" rx="11" ry="7" />
          <path d="M847 131C845 139 840 144 833 149M838 141C848 148 856 159 869 164" />
          <ellipse cx="960" cy="144" rx="12.500" ry="8" />
          <path d="M969 134C966 142 962 148 955 153 944 159 932 165 919 172M950 150L975 156" />
        </g>
        <path d="M971 291H978M974.500 287.500V294.500" stroke="#111" strokeWidth="1.200" />
      </svg>
      <div className="absolute left-[472px] top-[367px] text-[40px] leading-[48px] text-[#c80000] font-['Liberation_Serif',serif] tracking-[1px]">Group</div>
      <div className="absolute left-[731px] top-[403px] text-[40px] leading-[48px] text-[#0000a8] font-['Liberation_Serif',serif] tracking-[0.6px] whitespace-nowrap">Dialog Box Launcher</div>
    </div>
  );
}
